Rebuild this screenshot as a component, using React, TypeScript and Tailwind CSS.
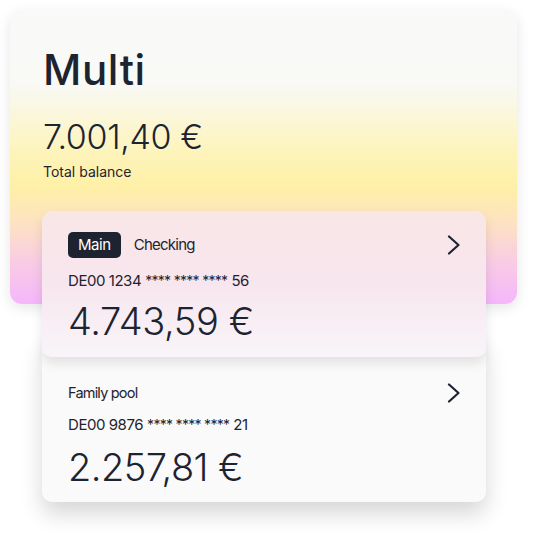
import React from "react";

const Chevron = () => (
  <svg width="14" height="20" viewBox="0 0 14 20" fill="none" className="shrink-0">
    <path d="M2 1.5 L11.5 10 L2 18.5" stroke="#1e2330" strokeWidth="2.2" strokeLinecap="round" strokeLinejoin="round" />
  </svg>
);

const Iban = ({ a, b }: { a: string; b: string }) => (
  <div className="flex items-baseline text-[15px] leading-[15px] text-[#1e2330] tracking-[-0.03em]">
    <span>{a}</span>
    <span className="ml-[4px] text-[14px] tracking-[-0.05em]">**** **** ****</span>
    <span className="ml-[4px]">{b}</span>
  </div>
);

export default function App() {
  return (
    <div
      className="w-[536px] h-[533px] bg-white pt-[10px] pl-[10px] pr-[19px] overflow-hidden"
      style={{ fontFamily: "Inter, 'Noto Sans', sans-serif" }}
    >
      <div className="h-[294px] rounded-[12px] pl-[33px] pt-[39px] shadow-[0_4px_14px_rgba(0,0,0,0.10)] bg-[linear-gradient(180deg,#f9f9f9_0%,#f9f9f6_25%,#fdf4bc_48%,#fef0a6_60%,#fde0c6_74%,#f9cde3_85%,#f5b6fb_100%)]">
        <div className="text-[42px] leading-[41px] font-medium text-[#1e2330] tracking-[0.015em]">Multi</div>
        <div className="mt-[30px] text-[34px] leading-[34px] font-light text-[#1e2330] tracking-[-0.01em]">7.001,40 €</div>
        <div className="mt-[11px] text-[14px] leading-[14px] text-[#1e2330]">Total balance</div>
      </div>

      <div className="relative -mt-[93px] ml-[32px] mr-[31px]">
        <div className="relative z-10 h-[146px] rounded-[10px] pl-[26px] pr-[25px] pt-[21px] shadow-[0_6px_12px_rgba(0,0,0,0.10)] bg-[linear-gradient(180deg,#f9e6e7_0%,#f8e6ef_50%,#f8f5f9_100%)]">
          <div className="flex items-center justify-between">
            <div className="flex items-center">
              <span className="h-[26px] px-[10px] rounded-[5px] bg-[#1e2330] text-white text-[15px] leading-[26px] tracking-[-0.03em]">Main</span>
              <span className="ml-[13px] text-[15px] leading-[26px] text-[#1e2330] tracking-[-0.05em]">Checking</span>
            </div>
            <Chevron />
          </div>
          <div className="mt-[15px]">
            <Iban a="DE00 1234" b="56" />
          </div>
          <div className="mt-[14px] text-[38px] leading-[38px] font-light text-[#1e2330] tracking-[-0.01em]">4.743,59 €</div>
        </div>
        <div className="-mt-[20px] h-[165px] rounded-[10px] bg-[#fafafa] pl-[26px] pr-[25px] pt-[43px] shadow-[0_12px_22px_rgba(0,0,0,0.16)]">
          <div className="flex items-center justify-between">
            <span className="text-[14.5px] leading-[26px] text-[#1e2330] tracking-[-0.055em]">Family pool</span>
            <Chevron />
          </div>
          <div className="mt-[11px]">
            <Iban a="DE00 9876" b="21" />
          </div>
          <div className="mt-[16px] text-[38px] leading-[38px] font-light text-[#1e2330] tracking-[-0.015em]">2.257,81 €</div>
        </div>
      </div>
    </div>
  );
}
